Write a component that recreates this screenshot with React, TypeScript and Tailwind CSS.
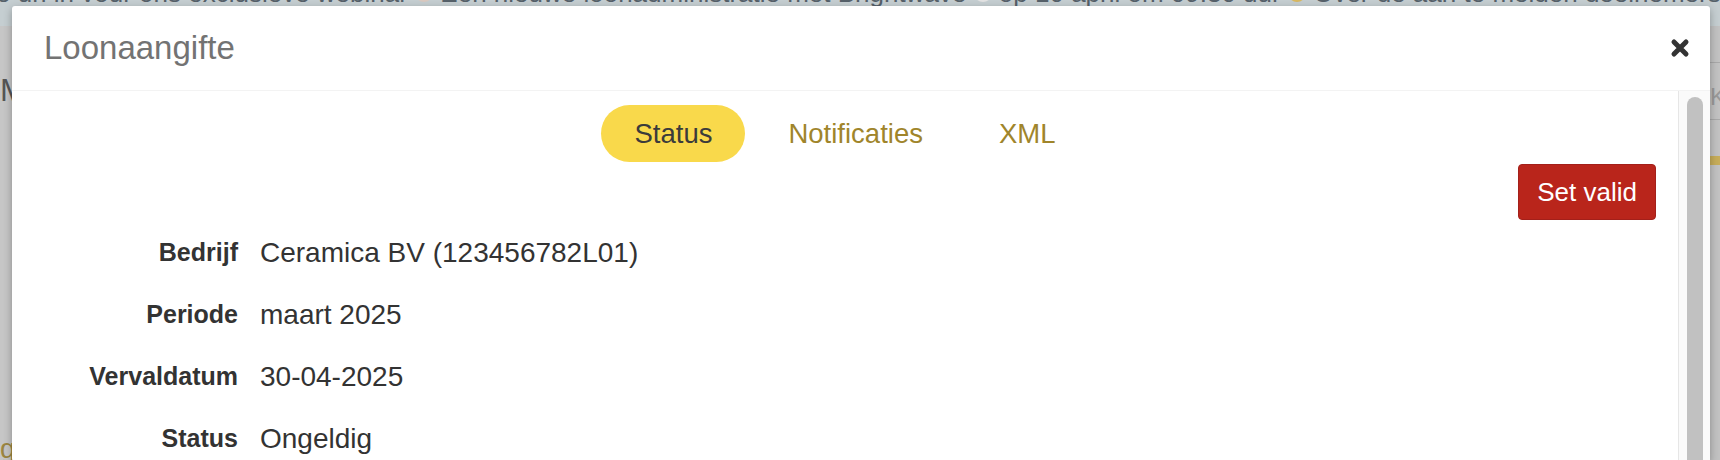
import React from "react";

const font = { fontFamily: '"Liberation Sans", Arial, Helvetica, sans-serif' };

function CloseIcon() {
  return (
    <svg width="20" height="20" viewBox="0 0 20 20" aria-hidden="true">
      <path d="M4 4 L16 16 M16 4 L4 16" stroke="#333" strokeWidth="5" strokeLinecap="round" fill="none" />
    </svg>
  );
}

function Row({ label, value }: { label: string; value: string }) {
  return (
    <div className="flex h-[62px] items-center">
      <div className="w-[226px] shrink-0 text-right text-[25px] font-bold text-[#333]">{label}</div>
      <div className="ml-[22px] text-[28px] text-[#333]">{value}</div>
    </div>
  );
}

export default function App() {
  return (
    <div className="relative h-[460px] w-[1720px] overflow-hidden bg-[#bdbdbd]" style={font}>
      {/* background page */}
      <div className="h-[26px] overflow-hidden bg-[#c5ced1]">
        <div className="-ml-[4px] -mt-[22px] whitespace-nowrap text-[26px] leading-[30px] text-[#56616a]">
          e url in vour ons exclusieve webinar <span className="inline-block h-[18px] w-[18px] rounded-full bg-[#d9c9c0]" /> Een nieuwe loonadministratie met Brightwave{" "}
          <span className="inline-block h-[18px] w-[18px] rounded-full bg-[#e3e3e3]" /> op 10 april om 09:30 uur{" "}
          <span className="inline-block h-[18px] w-[18px] rounded-full bg-[#d8b860]" /> Over de aan te melden deelnemers
        </div>
      </div>
      <div className="flex h-[434px] justify-between">
        <div className="flex w-[12px] flex-col overflow-hidden bg-[#c6c6c6]">
          <div className="mt-[48px] h-[32px] text-[32px] leading-[32px] text-[#555]">M</div>
          <div className="mt-[73px] h-[1px] bg-[#a9a9a9]" />
          <div className="mt-[80px] h-[1px] bg-[#b0b0b0]" />
          <div className="mt-[50px] h-[1px] bg-[#b0b0b0]" />
          <div className="mt-[125px] text-[28px] leading-[30px] text-[#9b8540]">g</div>
        </div>
        <div className="flex w-[10px] flex-col overflow-hidden bg-[#c2c2c2]">
          <div className="mt-[36px] h-[1px] bg-[#a9a9a9]" />
          <div className="mt-[20px] text-[24px] leading-[28px] text-[#999]">K</div>
          <div className="mt-[8px] h-[1px] bg-[#a9a9a9]" />
          <div className="mt-[36px] h-[9px] bg-[#c7ad5a]" />
        </div>
      </div>

      {/* modal */}
      <div className="absolute left-[12px] top-[6px] w-[1698px] rounded-[3px] bg-white shadow-[0_3px_9px_rgba(0,0,0,0.3)]">
        <div className="flex h-[85px] items-center justify-between border-b border-[#f3f3f3] pl-[32px] pr-[20px]">
          <div className="text-[33px] text-[#737373]">Loonaangifte</div>
          <CloseIcon />
        </div>
        <div className="flex h-[370px]">
          <div className="flex-1 pt-[14px]">
            <div className="flex justify-center gap-[10px]">
              <div className="flex h-[57px] items-center rounded-full bg-[#f9d94b] px-[33px] text-[27.5px] text-[#3b3b3b]">Status</div>
              <div className="flex h-[57px] items-center rounded-full px-[33px] text-[27.5px] text-[#a0852b]">Notificaties</div>
              <div className="flex h-[57px] items-center rounded-full px-[33px] text-[27.5px] text-[#a0852b]">XML</div>
            </div>
            <div className="mt-[2px] flex justify-end pr-[22px]">
              <button className="h-[56px] rounded-[4px] border border-[#a3201a] bg-[#b9251b] px-[18px] text-[26px] text-white">
                Set valid
              </button>
            </div>
            <div className="mt-[2px]">
              <Row label="Bedrijf" value="Ceramica BV (123456782L01)" />
              <Row label="Periode" value="maart 2025" />
              <Row label="Vervaldatum" value="30-04-2025" />
              <Row label="Status" value="Ongeldig" />
            </div>
          </div>
          <div className="w-[32px] border-l border-[#e6e6e6] bg-[#fafafa] pt-[6px]">
            <div className="mx-auto h-[400px] w-[16px] rounded-full bg-[#c1c1c1]" />
          </div>
        </div>
      </div>
    </div>
  );
}
